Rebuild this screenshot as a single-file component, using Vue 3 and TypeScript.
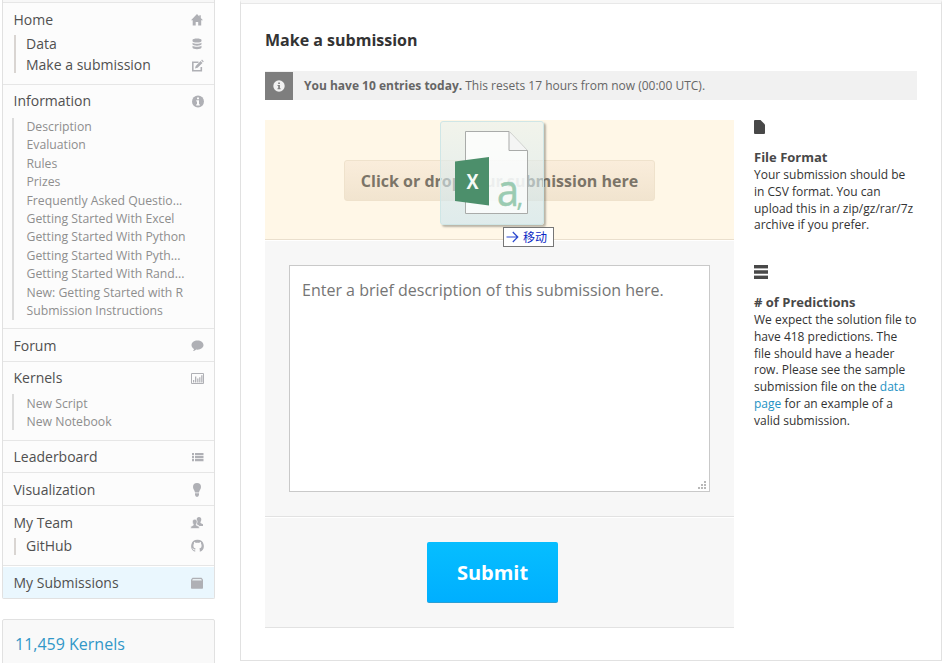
<script setup lang="ts">
const pages: string[] = [
  'Description', 'Evaluation', 'Rules', 'Prizes', 'Frequently Asked Questio...',
  'Getting Started With Excel', 'Getting Started With Python', 'Getting Started With Pyth...',
  'Getting Started With Rand...', 'New: Getting Started with R', 'Submission Instructions',
]
const kernels: string[] = ['New Script', 'New Notebook']
</script>

<template>
  <div class="page">
    <aside class="side">
      <nav class="menu">
        <section class="home">
          <div class="row"><a>Home</a>
            <svg class="ic" viewBox="0 0 14 14"><path d="M7 1 1 7.2h1.700V12.500h3V9h2.500v3.500h3V7.200H13L10.800 4.900V2.200H9.300v1.200z" /></svg>
          </div>
          <div class="subs">
            <div class="row"><a>Data</a>
              <svg class="ic" viewBox="0 0 14 14"><path d="M2.500 3c0-2 9-2 9 0v1c0 2-9 2-9 0zM2.500 5.700c2 1.300 7 1.300 9 0v1.500c0 1.900-9 1.900-9 0zM2.500 8.800c2 1.300 7 1.300 9 0v1.700c0 2.200-9 2.200-9 0z" /></svg>
            </div>
            <div class="row"><a>Make a submission</a>
              <svg class="ic edit" viewBox="0 0 14 14"><path class="stroke" d="M8.500 3.300H2.800v8.500h8.500V8" /><path d="m5 9.500.7-2.600 4.900-4.900 1.900 1.900-4.900 4.900zM11.200 1.400l.8-.8 1.800 1.800-.8.800z" /></svg>
            </div>
          </div>
        </section>
        <section class="info">
          <div class="row"><a>Information</a>
            <svg class="ic" viewBox="0 0 14 14"><circle cx="8" cy="7.500" r="6" /><path class="cut" d="M7 3.500h2v1.800H7zM6.300 6.300H9v4h.8v1.200H6.200v-1.200H7V7.500h-.7z" /></svg>
          </div>
          <ul class="links"><li v-for="p in pages" :key="p">{{ p }}</li></ul>
        </section>
        <section class="forum">
          <div class="row"><a>Forum</a>
            <svg class="ic" viewBox="0 0 14 14"><path d="M7.500 1.500c3.400 0 6 2 6 4.600s-2.600 4.600-6 4.600l-1.300-.1c-.7.900-1.900 1.500-3.200 1.500.7-.6 1-1.300 1-2.100-1.500-.9-2.500-2.300-2.500-3.900 0-2.600 2.600-4.600 6-4.600z" /></svg>
          </div>
        </section>
        <section class="kernels">
          <div class="row"><a>Kernels</a>
            <svg class="ic" viewBox="0 0 14 14"><path class="thin" d="M1.500 2.500h12v10h-12z" /><path d="M3 9h1.200v2.500H3zM5 5.500h1.300v6H5zM7.200 7.500h1.200v4H7.200zM9.200 6.200h1.200v5.300H9.200zM11.200 4.200h1.300v7.300h-1.300z" /></svg>
          </div>
          <ul class="links"><li v-for="k in kernels" :key="k">{{ k }}</li></ul>
        </section>
        <section class="board">
          <div class="row"><a>Leaderboard</a>
            <svg class="ic" viewBox="0 0 14 14"><path d="M2 3h2v2.300H2zM5 3h8.500v2.300H5zM2 6h2v2.300H2zM5 6h8.500v2.300H5zM2 9h2v2.300H2zM5 9h8.500v2.300H5z" /></svg>
          </div>
        </section>
        <section class="visual">
          <div class="row"><a>Visualization</a>
            <svg class="ic" viewBox="0 0 14 14"><path d="M7 0a4 4 0 0 1 4 4c0 2-1.700 3.200-2 5.500H5C4.700 7.200 3 6 3 4a4 4 0 0 1 4-4zM5 10.300h4v1.600l-1 1.800H6l-1-1.800z" /></svg>
          </div>
        </section>
        <section class="team">
          <div class="row"><a>My Team</a>
            <svg class="ic" viewBox="0 0 14 14"><path d="M9 1c1.500 0 2.300 1 2.300 2.500 0 1.300-.5 2-.8 2.500v1l2.500 1.200V10H9.500L7 8.300V6.500L7.500 6c-.5-.7-.8-1.300-.8-2.500C6.700 2 7.500 1 9 1z" /><path class="outlined" d="M4.800 3.200c1.600 0 2.300 1 2.300 2.500 0 1.200-.4 2-.8 2.500v1L9.200 10.500v2H.8v-2l2.500-1.300v-1c-.4-.5-.8-1.300-.8-2.500 0-1.500.8-2.500 2.300-2.500z" /></svg>
          </div>
          <div class="subs">
            <div class="row"><a>GitHub</a>
              <svg class="ic git" viewBox="0 0 14 14"><path d="M7.500.8a6.200 6.200 0 0 0-2.300 12v-1.600c-1.700.3-2-.7-2.400-1.300l-.7-.6c.9-.2 1.200.3 1.600.8.400.5.900.5 1.600.3l.3-.8C3.800 9.300 3.400 8 3.400 6.600c0-.7.2-1.300.6-1.800-.2-.6-.1-1.300.1-1.700.7 0 1.300.4 1.800.8 1-.3 2.200-.3 3.200 0 .5-.4 1.100-.8 1.800-.8.200.5.300 1.100.1 1.700.4.500.6 1.100.6 1.800 0 1.400-.5 2.700-2.200 3l.4 1.100v2.100A6.200 6.200 0 0 0 7.500.8z" /></svg>
            </div>
          </div>
        </section>
        <section class="mine">
          <div class="row"><a>My Submissions</a>
            <svg class="ic" viewBox="0 0 14 14"><path d="M2.500 1.700h9L13 3.500V12q0 .7-.7.700H1.700Q1 12.700 1 12V3.500z" /><path class="lid" d="M2.800 3h8.400l.6 1.500H2.200z" /></svg>
          </div>
        </section>
      </nav>
      <div class="count">11,459 Kernels</div>
    </aside>

    <main class="panel">
      <h1>Make a submission</h1>
      <div class="notice">
        <span class="badge"><svg viewBox="0 0 12 12"><circle cx="6" cy="6" r="5.700" /><path d="M5.200 2.500h1.700V4H5.200zM4.500 5h2.400v3.300h.7v1H4.500v-1h.7V6h-.7z" /></svg></span>
        <p><b>You have 10 entries today.</b> This resets 17 hours from now (00:00 UTC).</p>
      </div>
      <div class="columns">
        <form class="form" @submit.prevent>
          <div class="drop">
            <div class="pick">Click or drop your submission here</div>
            <div class="ghost">
              <svg viewBox="0 0 105 105">
                <path class="sheet" d="M25.500 10.500h43.500l18.500 19v63h-62z" />
                <path class="fold" d="M69 10.500v19h18.500" />
                <path class="book" d="m15 40.500 34-4.500v48.500l-34-4.500z" />
                <text class="x" x="26.500" y="68" textLength="12" lengthAdjust="spacingAndGlyphs">X</text>
                <text class="a" x="57" y="85" textLength="22" lengthAdjust="spacingAndGlyphs">a</text>
                <text class="comma" x="76" y="85">,</text>
              </svg>
            </div>
            <div class="tip"><svg viewBox="0 0 13 12"><path d="M.5 6h11M6.800 1l5 5-5 5" /></svg><span>移动</span></div>
          </div>
          <div class="desc">
            <div class="area">Enter a brief description of this submission here.
              <svg class="grip" viewBox="0 0 8 8"><path d="M6 0h2v2H6zM3 3h2v2H3zM6 3h2v2H6zM0 6h2v2H0zM3 6h2v2H3zM6 6h2v2H6z" /></svg>
            </div>
          </div>
          <div class="actions"><button type="submit">Submit</button></div>
        </form>
        <aside class="help">
          <div class="tipbox first">
            <svg viewBox="0 0 14 14"><path d="M1 0h5.500L11 4.500V13q0 1-1 1H1q-1 0-1-1V1q0-1 1-1z" /></svg>
            <h2>File Format</h2>
            <p>Your submission should be<br>in CSV format. You can<br>upload this in a zip/gz/rar/7z<br>archive if you prefer.</p>
          </div>
          <div class="tipbox">
            <svg viewBox="0 0 14 14"><path d="M0 0h14v3H0zM0 5.300h14v3.400H0zM0 11h14v3H0z" /><path class="mid" d="M0 3h14v1H0zM0 10h14v1H0z" /></svg>
            <h2># of Predictions</h2>
            <p>We expect the solution file to<br>have 418 predictions. The<br>file should have a header<br>row. Please see the sample<br>submission file on the <a>data<br>page</a> for an example of a<br>valid submission.</p>
          </div>
        </aside>
      </div>
    </main>
  </div>
</template>

<style>
body { margin: 0; background: #fff; overflow: hidden; }
</style>
<style scoped>
.page { box-sizing: border-box; width: 944px; height: 663px; overflow: hidden; display: flex; align-items: flex-start; padding-left: 2px; gap: 25px; font-family: "Open Sans", sans-serif; color: #505050; }
.page * { box-sizing: border-box; }
.side { width: 213px; flex: none; }
.menu { height: 599px; padding-top: 2px; border: 1px solid #e1e1e1; border-top: 0; border-radius: 0 0 2px 2px; background: #f7f7f7; }
section { border-top: 1px solid #e6e6e6; background: #fcfcfc; padding-left: 10px; font-size: 14px; }
.row { display: flex; justify-content: space-between; align-items: center; height: 22px; line-height: 22px; padding-right: 10px; white-space: nowrap; }
.row a { padding-left: .5px; }
.ic { width: 14px; height: 14px; flex: none; fill: #afb0b5; }
.ic .cut { fill: #fcfcfc; }
.ic .lid { fill: #e8eef1; }
.ic .stroke { fill: none; stroke: #afb0b5; stroke-width: 1.6; }
.ic .thin { fill: none; stroke: #afb0b5; }
.ic .outlined { stroke: #fcfcfc; stroke-width: .6; }
.subs { margin-left: 1px; border-left: 2px solid #d9d5d2; padding-left: 10px; }
.subs .row a { padding-left: 0; }
.home { height: 82px; padding-top: 6px; }
.home .subs { margin-top: 4px; height: 38px; }
.home .subs .row { height: 21px; position: relative; top: -2px; }
.edit { margin-top: 2px; }
.git { margin-top: 1px; }
.info { height: 244px; padding-top: 5px; }
.links { list-style: none; margin: 6px 0 0 -1px; padding: 0 0 0 12.5px; border-left: 2px solid #dcdcdc; font-size: 12.22px; color: #8e8e8e; height: 202px; line-height: 18.4px; white-space: nowrap; }
.links li { height: 18.4px; }
.forum { height: 33px; padding-top: 6px; }
.kernels { height: 79px; padding-top: 5px; }
.kernels .links { margin-top: 5px; height: 36px; padding-top: 1px; }
.board { height: 32px; padding-top: 5px; }
.visual { height: 33px; padding-top: 6px; }
.team { height: 60px; padding-top: 6px; }
.team .subs { margin-top: 4px; height: 17px; }
.team .subs .row { height: 15px; line-height: 15px; }
.mine { height: 33px; padding-top: 6px; background: #eaf7fe; box-shadow: inset 0 1px #fff; }
.count { margin-top: 20px; height: 60px; padding: 12px; border: 1px solid #e1e1e1; border-radius: 2px; background: #f9f9f9; color: #3197c8; font-size: 16px; line-height: 24px; }
.panel { width: 702px; height: 661px; flex: none; padding: 0 24px; border: 1px solid #e1e1e1; border-top: 3px solid #f7f7f7; box-shadow: inset 0 1px #e8e8e8; }
h1 { margin: 0; padding-top: 25px; height: 68px; font-size: 16px; line-height: 24px; color: #333; }
.notice { display: flex; width: 652px; height: 29px; padding-top: 1px; background: #f1f1f1; color: #666; font-size: 12px; }
.badge { width: 28px; height: 28px; display: grid; place-items: center; background: #7e7e7e; }
.badge svg { width: 12px; height: 12px; fill: #7e7e7e; }
.badge circle { fill: #f1f1f1; }
.notice p { margin: 0 0 0 11px; line-height: 28px; }
.columns { display: flex; gap: 20px; margin-top: 20px; }
.form { width: 469px; height: 508px; flex: none; background: #f7f7f7; border-bottom: 1px solid #e2e2e2; }
.drop { position: relative; height: 120px; padding-top: 40px; background: #fff7e7; border-bottom: 1px solid #eadfcd; }
.pick { width: 311px; height: 41px; margin-left: 79px; border: 1px solid #efe2cc; border-radius: 3px; background: linear-gradient(#faeddb, #f1e4cf); color: #7b7468; text-align: center; font-size: 16px; font-weight: 700; line-height: 40px; }
.ghost { position: absolute; left: 175px; top: 1px; width: 104px; height: 104px; border: 1px solid #cfe6e6; border-radius: 3px; background: linear-gradient(rgba(232,241,238,.58), rgba(205,229,238,.64)); box-shadow: 2px 2px 2px rgba(80,80,70,.4); }
.ghost svg { width: 105px; height: 105px; display: block; margin: -1px; }
.sheet { fill: rgba(255,255,255,.75); stroke: #a9aba9; }
.fold { fill: #f4f5f4; stroke: #a9aba9; }
.book { fill: #4c8f6b; }
.x { font: 700 22px "Open Sans", sans-serif; fill: #f4faf6; }
.a { font: 400 43px "Open Sans", sans-serif; fill: #9bcbb2; stroke: #9bcbb2; stroke-width: .6; }
.comma { font: 400 30px "Open Sans", sans-serif; fill: #9bcbb2; }
.tip { position: absolute; left: 238px; top: 107px; width: 51px; height: 20px; display: flex; align-items: center; border: 1px solid #767676; background: #fff; padding-left: 2px; color: #0b28c4; font: 12px/18px "Noto Sans CJK SC", sans-serif; }
.tip svg { width: 13px; height: 12px; margin-right: 4px; fill: none; stroke: #2947cf; stroke-width: 1.2; }
.desc { height: 277px; padding: 25px 24px; border-bottom: 1px solid #e2e2e2; box-shadow: inset 0 1px #fff; }
.area { position: relative; width: 421px; height: 227px; padding: 12px; border: 1px solid #c9c9c9; background: #fff; font-size: 16px; line-height: 24px; color: #757575; }
.grip { position: absolute; right: 3px; bottom: 2px; width: 8px; height: 8px; fill: #b8b8b8; }
.actions { height: 110px; padding: 25px 0 0 162px; box-shadow: inset 0 1px #fff; }
button { display: block; width: 131px; height: 61px; padding: 0; border: 0; border-bottom: 1px solid #2b9fd4; border-radius: 2px; background: linear-gradient(#06beff, #00afff); color: #fff; font: 700 20px "Open Sans", sans-serif; }
.help { width: 164px; flex: none; white-space: nowrap; font-size: 12px; line-height: 16.8px; color: #333; }
.tipbox svg { display: block; width: 14px; height: 14px; fill: #484848; }
.tipbox .mid { fill: #b5b5b5; }
.tipbox h2 { margin: 15px 0 0; font-size: 13px; line-height: 17px; color: #484848; }
.tipbox p { margin: 1px 0 0; }
.first { height: 145px; }
.help a { color: #2492c4; }
</style>
